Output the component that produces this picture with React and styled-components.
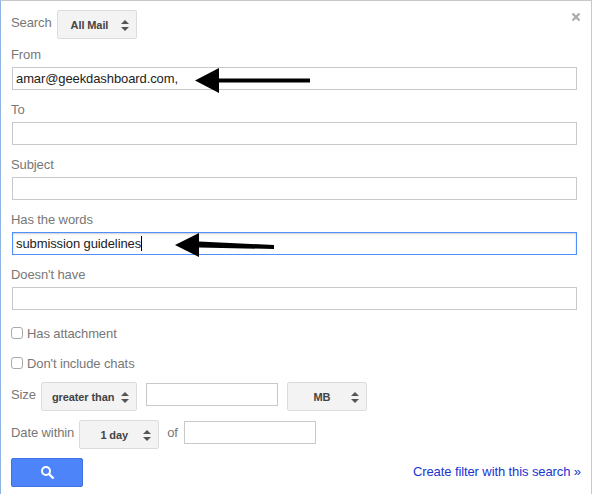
import React from 'react';
import styled, { createGlobalStyle } from 'styled-components';

const Global = createGlobalStyle`
	html, body {
		margin: 0;
		padding: 0;
		background: #fff;
	}
	* {
		box-sizing: border-box;
	}
`;

const Panel = styled.div`
	position: relative;
	width: 592px;
	height: 494px;
	padding: 9px 14px 0 10px;
	background: #fff;
	border-top: 1px solid #c8c8c8;
	border-right: 1px solid #c8c8c8;
	border-left: 1px solid #8fb4e4;
	font-family: 'Liberation Sans', Arial, sans-serif;
	font-size: 13px;
	letter-spacing: -0.1px;
	color: #777;
	overflow: hidden;
`;

const Close = styled.div`
	position: absolute;
	top: 9px;
	right: 10px;
	width: 10px;
	height: 10px;
`;

const Row = styled.div`
	display: flex;
	align-items: center;
	height: 29px;
	margin-top: ${p => p.$top || 0}px;
	margin-bottom: ${p => p.$bottom || 0}px;
`;

const Label = styled.span`
	margin-right: ${p => p.$gap || 0}px;
	margin-top: -5px;
`;

const Select = styled.div`
	display: flex;
	align-items: center;
	justify-content: ${p => (p.$left ? 'flex-start' : 'center')};
	position: relative;
	width: ${p => p.$w}px;
	height: 29px;
	margin-right: ${p => p.$gap || 0}px;
	padding: 0 ${p => (p.$left ? 0 : 10)}px 0 ${p => p.$pad || 0}px;
	background: #f3f3f3;
	border: 1px solid #dcdcdc;
	border-radius: 2px;
	font-size: 11px;
	font-weight: bold;
	color: #444;
`;

const Updown = styled.svg`
	position: absolute;
	right: 7px;
	top: 9px;
	width: 8px;
	height: 11px;
`;

const Field = styled.div`
	height: 55px;
`;

const FieldLabel = styled.div`
	height: 22px;
	padding-top: 1px;
	line-height: 18px;
`;

const TextInput = styled.div`
	display: flex;
	align-items: center;
	width: ${p => p.$w || 565}px;
	height: 23px;
	margin-left: ${p => p.$inset || 0}px;
	margin-right: ${p => p.$gap || 0}px;
	padding: 0 0 1px 3px;
	background: #fff;
	border: 1px solid ${p => (p.$focus ? '#4d90fe' : '#c9c9c9')};
	box-shadow: ${p => (p.$focus ? 'inset 0 1px 2px rgba(0, 0, 0, 0.2)' : 'none')};
	color: #222;
	font-size: 13px;
`;

const RowInput = styled(TextInput)`
	align-self: flex-start;
	margin-top: 1px;
`;

const Caret = styled.span`
	display: inline-block;
	width: 1px;
	height: 15px;
	background: #000;
`;

const CheckRow = styled.div`
	display: flex;
	align-items: center;
	height: 30px;
	margin-top: ${p => p.$top || 0}px;
`;

const Check = styled.span`
	width: 12px;
	height: 12px;
	margin-right: 4px;
	background: #fff;
	border: 1px solid #aaa;
	border-radius: 3px;
`;

const Footer = styled.div`
	display: flex;
	align-items: center;
	justify-content: space-between;
	height: 29px;
	margin-top: 9px;
`;

const SearchButton = styled.div`
	display: flex;
	align-items: center;
	justify-content: center;
	width: 72px;
	height: 29px;
	background: #4d84fa;
	border: 1px solid #3d72e0;
	border-radius: 2px;
`;

const FilterLink = styled.a`
	margin-right: -4px;
	margin-top: -3px;
	color: #1a35d0;
	font-size: 13px;
`;

const Arrow = styled.svg`
	position: absolute;
	left: ${p => p.$x}px;
	top: ${p => p.$y}px;
`;

const fields = [
	{ label: 'From', value: 'amar@geekdashboard.com,' },
	{ label: 'To' },
	{ label: 'Subject' },
	{ label: 'Has the words', value: 'submission guidelines', focus: true },
	{ label: "Doesn't have" },
];

const Arrows = () => (
	<Updown viewBox="0 0 8 11">
		<path d="M4 0 L8 4 H0 Z M0 7 H8 L4 11 Z" fill="#555" />
	</Updown>
);

const Dropdown = ({ w, gap, left, pad, children }) => (
	<Select $w={w} $gap={gap} $left={left} $pad={pad}>
		{children}
		<Arrows />
	</Select>
);

const App = () => (
	<Panel>
		<Global />
		<Close>
			<svg width="10" height="10" viewBox="0 0 10 10">
				<path d="M1.5 1.5 L8.5 8.5 M8.5 1.5 L1.5 8.5" stroke="#aaa" strokeWidth="2.2" />
			</svg>
		</Close>

		<Row $bottom={6}>
			<Label $gap={5}>Search</Label>
			<Dropdown w={80} left pad={13}>All Mail</Dropdown>
		</Row>

		{fields.map(f => (
			<Field key={f.label}>
				<FieldLabel>{f.label}</FieldLabel>
				<TextInput $focus={f.focus} $inset={1}>
					{f.value}
					{f.focus && <Caret />}
				</TextInput>
			</Field>
		))}

		<CheckRow $top={-2}>
			<Check />
			Has attachment
		</CheckRow>
		<CheckRow>
			<Check />
			Don't include chats
		</CheckRow>

		<Row $top={4}>
			<Label $gap={5}>Size</Label>
			<Dropdown w={96} gap={9} left pad={10}>greater than</Dropdown>
			<RowInput $w={132} $gap={9} />
			<Dropdown w={80}>MB</Dropdown>
		</Row>
		<Row $top={9}>
			<Label $gap={5}>Date within</Label>
			<Dropdown w={80} gap={8}>1 day</Dropdown>
			<Label $gap={6}>of</Label>
			<RowInput $w={132} />
		</Row>

		<Footer>
			<SearchButton>
				<svg width="15" height="15" viewBox="0 0 15 15">
					<circle cx="6" cy="6" r="4" fill="none" stroke="#fff" strokeWidth="2" />
					<path d="M9 9 L13.5 13.5" stroke="#fff" strokeWidth="2.4" />
				</svg>
			</SearchButton>
			<FilterLink>Create filter with this search »</FilterLink>
		</Footer>

		<Arrow $x={193} $y={66} width="120" height="27" viewBox="0 0 120 27">
			<path d="M1 13.5 L25 1 V11.5 H116 V15.5 H25 V26 Z" fill="#000" />
		</Arrow>
		<Arrow $x={173} $y={231} width="104" height="26" viewBox="0 0 104 26">
			<path d="M1 13 L25 1 V9.5 L100 13 V17 L25 15.5 V25 Z" fill="#000" />
		</Arrow>
	</Panel>
);

export default App;
